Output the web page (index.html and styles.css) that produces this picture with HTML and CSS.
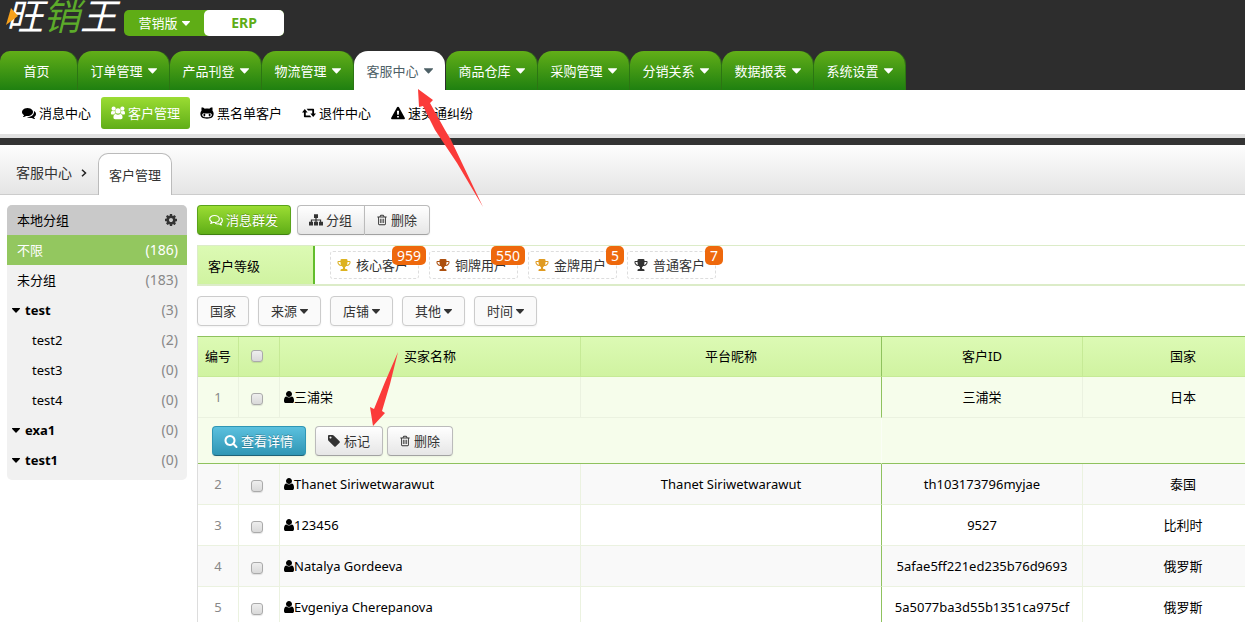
FILE: index.html
```html
<!DOCTYPE html>
<html lang="zh-CN">
<head>
<meta charset="utf-8">
<title>客户管理</title>
<link rel="stylesheet" href="styles.css">
</head>
<body>
<svg class="sprite" aria-hidden="true">
  <symbol id="comments" viewBox="0 0 1792 1792"><path d="M1408 768q0 139-94 257t-256.500 186.500-353.500 68.500q-86 0-176-16-124 88-278 128-36 9-86 16h-3q-11 0-20.500-8t-11.500-21q-1-3-1-6.500t.5-6.500 2-6l2.500-5 3.500-5.500 4-5 4.500-5 4-4.500q5-6 23-25t26-29.500 22.500-29 25-38.500 20.500-44q-124-72-195-177t-71-224q0-139 94-257t256.500-186.500 353.500-68.500 353.500 68.500 256.500 186.500 94 257zm384 256q0 120-71 224.500t-195 176.500q10 24 20.500 44t25 38.500 22.500 29 26 29.500 23 25q1 1 4 4.500t4.500 5 4 5 3.500 5.500l2.500 5 2 6 .5 6.500-1 6.500q-3 14-13 22t-22 7q-50-7-86-16-154-40-278-128-90 16-176 16-271 0-472-132 58 4 88 4 161 0 309-45t264-129q125-92 192-212t67-254q0-77-23-152 129 71 204 178t75 230z"/></symbol>
  <symbol id="comments-o" viewBox="0 0 16 16"><path fill="none" stroke="currentColor" stroke-width="1.300" stroke-linejoin="round" d="M6.300 2.800C3.300 2.800.8 4.500.8 6.800c0 1.400.9 2.500 2.300 3.200L2 12c1.300-.3 2-.8 2.700-1.300.5.100 1 .1 1.600.1 3 0 5.500-1.700 5.500-4s-2.500-4-5.500-4zM13.300 5.500c1.200.7 2 1.800 2 3 0 1.400-.9 2.500-2.200 3.200l1.100 2c-1.300-.3-2.100-.8-2.700-1.300-1.700.3-3.300 0-4.500-.6"/></symbol>
  <symbol id="group" viewBox="0 0 16 16"><circle cx="3" cy="3" r="2.400"/><circle cx="13" cy="3" r="2.400"/><circle cx="8" cy="5.700" r="3"/><path d="M0 8.500C0 6.500.6 5.500 1.600 5.500c1 .6 2 .6 2.900.2C4.400 7 5 8 5.600 8.600 4.300 8.500 3.600 9 3.100 9.700H1.300C.5 9.700 0 9.200 0 8.500zM16 8.500c0-2-.6-3-1.600-3-1 .6-2 .6-2.900.2.100 1.300-.5 2.300-1.100 2.900 1.300-.1 2 .4 2.500 1.100h1.800c.8 0 1.300-.5 1.300-1.200zM2.800 13.200c0-2.700.8-4.200 2.600-4.200 1.600 1.200 3.600 1.200 5.200 0 1.800 0 2.600 1.500 2.600 4.200 0 1.200-.8 1.900-1.900 1.900H4.700c-1.100 0-1.900-.7-1.900-1.900z"/></symbol>
  <symbol id="cat" viewBox="0 0 16 16"><path fill-rule="evenodd" d="M2 1.500c1.500.2 2.700.9 3.500 1.600 1.600-.4 3.400-.4 5 0 .8-.7 2-1.400 3.500-1.600.5 1.200.5 2.500.2 3.500.9 1 1.400 2.200 1.400 3.700 0 4.200-2.500 5.800-7.600 5.800S.4 12.900.4 8.700C.4 7.200.9 6 1.800 5c-.3-1-.3-2.300.2-3.500zM5 8.200c-1.700 0-2.500.6-2.500 2.100 0 1.900 1.800 2.600 5.500 2.600s5.500-.7 5.500-2.600c0-1.500-.8-2.100-2.500-2.100-1 0-1.900.3-3 .3s-2-.3-3-.3z"/><ellipse cx="5" cy="10.300" rx="1.100" ry="1.600"/><ellipse cx="11" cy="10.300" rx="1.100" ry="1.600"/></symbol>
  <symbol id="retweet" viewBox="0 0 16 16"><path d="M0 7.300 3.200 3.300 6.400 7.300H4.300v3.600h4.800l1.600 2H3.400c-.7 0-1.200-.4-1.200-1.200V7.300zM16 8.700l-3.200 4-3.200-4h2.100V5.100H6.900l-1.600-2h7.300c.7 0 1.200.4 1.200 1.200v4.400z"/></symbol>
  <symbol id="warning" viewBox="0 0 16 16"><path fill-rule="evenodd" d="M8 .8c.5 0 .9.200 1.100.7l6.600 11.800c.5.900-.1 1.900-1.100 1.900H1.400c-1 0-1.600-1-1.100-1.900L6.900 1.500C7.100 1 7.500.8 8 .8zM6.800 5.500l.3 4.600h1.800l.3-4.600zM7 11.300v1.900h2v-1.900z"/></symbol>
  <symbol id="sitemap" viewBox="0 0 16 16"><path d="M5.700 1.500h4.600v4.200H8.700v1.600h5.200V10H16v4.300h-4.600V10h1.200V8.600H8.700V10h1.600v4.300H5.700V10h1.600V8.600H3.400V10h1.200v4.300H0V10h2.100V7.300h5.200V5.700H5.700z"/></symbol>
  <symbol id="trash" viewBox="0 0 1792 1792"><path d="M704 736v576q0 14-9 23t-23 9h-64q-14 0-23-9t-9-23v-576q0-14 9-23t23-9h64q14 0 23 9t9 23zm256 0v576q0 14-9 23t-23 9h-64q-14 0-23-9t-9-23v-576q0-14 9-23t23-9h64q14 0 23 9t9 23zm256 0v576q0 14-9 23t-23 9h-64q-14 0-23-9t-9-23v-576q0-14 9-23t23-9h64q14 0 23 9t9 23zm128 724v-948h-896v948q0 22 7 40.500t14.500 27 10.500 8.500h832q3 0 10.500-8.500t14.500-27 7-40.500zm-672-1076h448l-48-117q-7-9-17-11h-317q-10 2-17 11zm928 32v64q0 14-9 23t-23 9h-96v948q0 83-47 143.500t-113 60.500h-832q-66 0-113-58.500t-47-141.500v-952h-96q-14 0-23-9t-9-23v-64q0-14 9-23t23-9h309l70-167q15-37 54-63t79-26h320q40 0 79 26t54 63l70 167h309q14 0 23 9t9 23z"/></symbol>
  <symbol id="cog" viewBox="0 0 1792 1792"><path d="M1152 896q0-106-75-181t-181-75-181 75-75 181 75 181 181 75 181-75 75-181zm512-109v222q0 12-8 23t-20 13l-185 28q-19 54-39 91 35 50 107 138 10 12 10 25t-9 23q-27 37-99 108t-94 71q-12 0-26-9l-138-108q-44 23-91 38-16 136-29 186-7 28-36 28h-222q-14 0-24.500-8.500t-11.500-21.500l-28-184q-49-16-90-37l-141 107q-10 9-25 9-14 0-25-11-126-114-165-168-7-10-7-23 0-12 8-23 15-21 51-66.500t54-70.500q-27-50-41-99l-183-27q-13-2-21-12.500t-8-23.500v-222q0-12 8-23t19-13l186-28q14-46 39-92-40-57-107-138-10-12-10-24 0-10 9-23 26-36 98.500-107.500t94.500-71.500q13 0 26 10l138 107q44-23 91-38 16-136 29-186 7-28 36-28h222q14 0 24.500 8.500t11.500 21.500l28 184q49 16 90 37l142-107q9-9 24-9 13 0 25 10 129 119 165 170 7 8 7 22 0 12-8 23-15 21-51 66.500t-54 70.500q26 50 41 98l183 28q13 2 21 12.500t8 23.500z"/></symbol>
  <symbol id="trophy" viewBox="0 0 1792 1792"><path d="M522 883q-74-162-74-371h-256v96q0 78 94.500 162t235.500 113zm1078-275v-96h-256q0 209-74 371 141-29 235.500-113t94.500-162zm128-128v128q0 71-41.500 143t-112 130-173 97.500-215.500 44.500q-42 54-95 95-38 34-52.500 72.500t-14.500 89.500q0 54 30.500 91t97.500 37q75 0 133.500 45.500t58.500 114.500v64q0 14-9 23t-23 9h-832q-14 0-23-9t-9-23v-64q0-69 58.500-114.500t133.500-45.500q67 0 97.500-37t30.500-91q0-51-14.500-89.500t-52.500-72.500q-53-41-95-95-113-5-215.500-44.500t-173-97.500-112-130-41.500-143v-128q0-40 28-68t68-28h288v-96q0-66 47-113t113-47h576q66 0 113 47t47 113v96h288q40 0 68 28t28 68z"/></symbol>
  <symbol id="user" viewBox="0 0 1792 1792"><path d="M1536 1399q0 109-62.500 187t-150.500 78h-854q-88 0-150.500-78t-62.500-187q0-85 8.500-160.500t31.500-152 58.500-131 94-89 134.500-34.500q131 128 313 128t313-128q76 0 134.500 34.500t94 89 58.500 131 31.500 152 8.500 160.500zm-256-887q0 159-112.500 271.500t-271.500 112.500-271.500-112.500-112.500-271.500 112.500-271.500 271.500-112.500 271.500 112.500 112.500 271.500z"/></symbol>
  <symbol id="search" viewBox="0 0 1792 1792"><path d="M1216 832q0-185-131.500-316.500t-316.500-131.500-316.500 131.500-131.500 316.500 131.500 316.500 316.500 131.500 316.500-131.500 131.500-316.500zm512 832q0 52-38 90t-90 38q-54 0-90-38l-343-342q-179 124-399 124-143 0-273.500-55.500t-225-150-150-225-55.500-273.500 55.500-273.500 150-225 225-150 273.500-55.500 273.500 55.500 225 150 150 225 55.500 273.500q0 220-124 399l343 343q37 37 37 90z"/></symbol>
  <symbol id="tag" viewBox="0 0 1792 1792"><path d="M576 448q0-53-37.500-90.500t-90.500-37.500-90.500 37.500-37.500 90.500 37.500 90.500 90.500 37.500 90.500-37.500 37.500-90.500zm1067 576q0 53-37 90l-491 492q-39 37-91 37-53 0-90-37l-715-716q-38-37-64.500-101t-26.500-117v-416q0-52 38-90t90-38h416q53 0 117 26.500t102 64.500l715 714q37 39 37 91z"/></symbol>
  <symbol id="caret" viewBox="0 0 8 5"><path d="M.6 0h6.800c.6 0 .8.500.4.900L4.500 4.600c-.3.300-.7.300-1 0L.2.900C-.2.500 0 0 .6 0z"/></symbol>
</svg>

<header class="header">
  <div class="brand-row">
    <a class="logo" href="#" aria-label="旺销王"><svg class="logo-beak" viewBox="0 0 12 17"><path fill="#f7a11b" d="M5 0 12 8 0 17z"/></svg><span>旺</span><span class="logo-mid">销</span><span>王</span></a>
    <div class="edition"><button class="edition-on">营销版<svg class="caret"><use href="#caret"/></svg></button><button class="edition-off">ERP</button></div>
  </div>
  <nav class="tabs">
    <a class="tab tab-home" href="#">首页</a>
    <a class="tab" href="#">订单管理<svg class="caret"><use href="#caret"/></svg></a>
    <a class="tab" href="#">产品刊登<svg class="caret"><use href="#caret"/></svg></a>
    <a class="tab" href="#">物流管理<svg class="caret"><use href="#caret"/></svg></a>
    <a class="tab tab-active" href="#">客服中心<svg class="caret"><use href="#caret"/></svg></a>
    <a class="tab" href="#">商品仓库<svg class="caret"><use href="#caret"/></svg></a>
    <a class="tab" href="#">采购管理<svg class="caret"><use href="#caret"/></svg></a>
    <a class="tab" href="#">分销关系<svg class="caret"><use href="#caret"/></svg></a>
    <a class="tab" href="#">数据报表<svg class="caret"><use href="#caret"/></svg></a>
    <a class="tab" href="#">系统设置<svg class="caret"><use href="#caret"/></svg></a>
  </nav>
</header>

<nav class="subnav">
  <a class="subnav-item" href="#"><svg class="icon"><use href="#comments"/></svg>消息中心</a>
  <a class="subnav-item subnav-active" href="#"><svg class="icon"><use href="#group"/></svg>客户管理</a>
  <a class="subnav-item" href="#"><svg class="icon"><use href="#cat"/></svg>黑名单客户</a>
  <a class="subnav-item" href="#"><svg class="icon"><use href="#retweet"/></svg>退件中心</a>
  <a class="subnav-item" href="#"><svg class="icon"><use href="#warning"/></svg>速卖通纠纷</a>
</nav>

<div class="crumbs">
  <a class="crumb" href="#">客服中心</a>
  <svg class="chevron" viewBox="0 0 6 8"><path fill="none" stroke="#222" stroke-width="1.500" d="M1 .7 4.500 4 1 7.300"/></svg>
  <a class="crumb-tab" href="#">客户管理</a>
</div>

<div class="page">
  <aside class="sidebar">
    <div class="side-head"><span>本地分组</span><button class="gear" aria-label="设置"><svg class="icon"><use href="#cog"/></svg></button></div>
    <a class="side-row side-on" href="#"><span>不限</span><span class="count">(186)</span></a>
    <a class="side-row" href="#"><span>未分组</span><span class="count">(183)</span></a>
    <a class="side-row side-parent" href="#"><svg class="caret"><use href="#caret"/></svg><b>test</b><span class="count">(3)</span></a>
    <a class="side-row side-child" href="#"><span>test2</span><span class="count">(2)</span></a>
    <a class="side-row side-child" href="#"><span>test3</span><span class="count">(0)</span></a>
    <a class="side-row side-child" href="#"><span>test4</span><span class="count">(0)</span></a>
    <a class="side-row side-parent" href="#"><svg class="caret"><use href="#caret"/></svg><b>exa1</b><span class="count">(0)</span></a>
    <a class="side-row side-parent" href="#"><svg class="caret"><use href="#caret"/></svg><b>test1</b><span class="count">(0)</span></a>
  </aside>

  <main class="main">
    <div class="toolbar">
      <button class="btn btn-green"><svg class="icon"><use href="#comments-o"/></svg>消息群发</button>
      <div class="btn-group"><button class="btn"><svg class="icon"><use href="#sitemap"/></svg>分组</button><button class="btn btn-trash"><svg class="icon"><use href="#trash"/></svg>删除</button></div>
    </div>

    <div class="levels">
      <div class="levels-label">客户等级</div>
      <div class="levels-list">
        <a class="level" href="#"><svg class="icon gold"><use href="#trophy"/></svg>核心客户<span class="badge">959</span></a>
        <a class="level" href="#"><svg class="icon bronze"><use href="#trophy"/></svg>铜牌用户<span class="badge">550</span></a>
        <a class="level" href="#"><svg class="icon amber"><use href="#trophy"/></svg>金牌用户<span class="badge">5</span></a>
        <a class="level" href="#"><svg class="icon"><use href="#trophy"/></svg>普通客户<span class="badge">7</span></a>
      </div>
    </div>

    <div class="filters">
      <button class="filter">国家</button>
      <button class="filter">来源<svg class="caret"><use href="#caret"/></svg></button>
      <button class="filter">店铺<svg class="caret"><use href="#caret"/></svg></button>
      <button class="filter">其他<svg class="caret"><use href="#caret"/></svg></button>
      <button class="filter">时间<svg class="caret"><use href="#caret"/></svg></button>
    </div>

    <div class="table-wrap">
      <table class="grid">
        <colgroup><col class="c-num"><col class="c-check"><col class="c-wide"><col class="c-wide"><col class="c-mid"><col class="c-mid"></colgroup>
        <thead>
          <tr><th>编号</th><th><input type="checkbox" aria-label="全选"></th><th>买家名称</th><th class="edge">平台昵称</th><th>客户ID</th><th>国家</th></tr>
        </thead>
        <tbody>
          <tr class="picked"><td class="num">1</td><td><input type="checkbox" aria-label="选择 1"></td><td class="name"><svg class="icon"><use href="#user"/></svg>三浦栄</td><td class="edge"></td><td>三浦栄</td><td>日本</td></tr>
          <tr class="actions"><td colspan="4"><div class="row-actions"><button class="btn btn-blue"><svg class="icon"><use href="#search"/></svg>查看详情</button><button class="btn"><svg class="icon"><use href="#tag"/></svg>标记</button><button class="btn btn-trash"><svg class="icon"><use href="#trash"/></svg>删除</button></div></td><td colspan="2"></td></tr>
          <tr class="odd"><td class="num">2</td><td><input type="checkbox" aria-label="选择 2"></td><td class="name"><svg class="icon"><use href="#user"/></svg>Thanet Siriwetwarawut</td><td class="edge">Thanet Siriwetwarawut</td><td>th103173796myjae</td><td>泰国</td></tr>
          <tr><td class="num">3</td><td><input type="checkbox" aria-label="选择 3"></td><td class="name"><svg class="icon"><use href="#user"/></svg>123456</td><td class="edge"></td><td>9527</td><td>比利时</td></tr>
          <tr class="odd"><td class="num">4</td><td><input type="checkbox" aria-label="选择 4"></td><td class="name"><svg class="icon"><use href="#user"/></svg>Natalya Gordeeva</td><td class="edge"></td><td>5afae5ff221ed235b76d9693</td><td>俄罗斯</td></tr>
          <tr><td class="num">5</td><td><input type="checkbox" aria-label="选择 5"></td><td class="name"><svg class="icon"><use href="#user"/></svg>Evgeniya Cherepanova</td><td class="edge"></td><td>5a5077ba3d55b1351ca975cf</td><td>俄罗斯</td></tr>
        </tbody>
      </table>
    </div>
  </main>
</div>

<svg class="pointer pointer-up" viewBox="0 0 66 119" aria-hidden="true"><path fill="#fb3b39" d="M0 0 15 11 12 14 27 41 33 51 44 74 65 118 39 74 25 53 17 41 5 17 1 18z"/></svg>
<svg class="pointer pointer-down" viewBox="0 0 30 76" aria-hidden="true"><path fill="#fb3b39" d="M28 0 20 32 12 59 15 61 3 74 0 55 4 57 15 30z"/></svg>
</body>
</html>
```
FILE: styles.css
```css
* { box-sizing: border-box; }
html { overflow: hidden; height: 100%; }
body {
  margin: 0;
  height: 100%;
  overflow: hidden;
  background: #fff;
  color: #000;
  font: 13px/20px "Noto Sans", "Noto Sans CJK SC", sans-serif;
}
a { color: inherit; text-decoration: none; }
button { font: inherit; color: inherit; border: 0; background: none; padding: 0; margin: 0; }
svg { fill: currentColor; flex: none; }
.sprite { position: absolute; width: 0; height: 0; }
.icon { width: 14px; height: 14px; }
.caret { width: 8px; height: 5px; }

/* header */
.header { background: #2d2d2d; }
.brand-row { display: flex; height: 51px; padding-left: 6px; }
.logo {
  position: relative;
  display: flex;
  width: 118px;
  height: 36px;
  align-items: flex-end;
  color: #fff;
  font-size: 37px;
  line-height: 40px;
  font-style: italic;
}
.logo-mid { color: #5cab2a; }
.logo-beak { position: absolute; left: 0; top: 8px; width: 12px; height: 17px; z-index: 1; }
.edition {
  display: flex;
  align-self: flex-start;
  height: 26px;
  margin-top: 10px;
  border-radius: 5px;
  background: #5fad16;
  color: #fff;
}
.edition button { width: 80px; display: flex; align-items: center; justify-content: center; gap: 4px; }
.edition .edition-off { background: #fff; color: #5fad16; font-size: 14px; font-weight: bold; border-radius: 5px; }
.tabs { display: flex; gap: 1px; }
.tab {
  display: flex;
  align-items: center;
  justify-content: center;
  gap: 5px;
  width: 91px;
  height: 39px;
  border-radius: 14px 14px 0 0;
  background: linear-gradient(#62ae18, #1f8010);
  box-shadow: 1px 0 0 #2c7513;
  color: #fff;
}
.tab .caret { width: 9px; height: 6px; }
.tab-home { width: 77px; padding-right: 4px; border-top-left-radius: 10px; }
.tab-active { background: #fff; color: #4d6066; box-shadow: none; }

/* second level */
.subnav {
  display: flex;
  padding: 7px 12px 5px;
  border-bottom: 4px solid #e1e1e1;
}
.subnav-item { display: flex; align-items: center; gap: 3px; height: 32px; padding: 0 10px; border-radius: 3px; }
.subnav-active { background: linear-gradient(#9bdc33, #60ae18); color: #fff; }

/* breadcrumb */
.crumbs {
  display: flex;
  align-items: flex-end;
  height: 57px;
  padding-left: 16px;
  border-top: 7px solid #333;
  background: linear-gradient(#fdfdfd, #e4e4e4);
  box-shadow: inset 0 -1px 0 #ccc;
  color: #333;
}
.crumb { font-size: 14px; line-height: 20px; margin-bottom: 12px; }
.chevron { width: 6px; height: 8px; margin: 0 11px 18px 9px; }
.crumb-tab {
  padding: 11px 10px 10px;
  border: 1px solid #bbb;
  border-bottom: 0;
  border-radius: 10px 10px 0 0;
  background: #fff;
}

/* page */
.page { display: flex; align-items: flex-start; gap: 10px; padding: 10px 0 0 7px; }
.sidebar { flex: none; width: 180px; padding-bottom: 5px; border-radius: 5px; background: #f1f1f1; overflow: hidden; }
.side-head, .side-row { display: flex; align-items: center; height: 30px; padding: 0 9px 0 10px; }
.side-head { justify-content: space-between; background: #c9c9c9; }
.gear { display: flex; color: #333; }
.side-row .count { margin-left: auto; color: #888; font-size: 14px; }
.side-on { background: #93c75f; color: #fff; }
.side-row.side-on .count { color: #fff; }
.side-parent { padding-left: 5px; gap: 5px; }
.side-child { padding-left: 25px; }

.main { flex: 1; min-width: 0; }
.toolbar { display: flex; gap: 6px; }
.btn {
  display: flex;
  align-items: center;
  gap: 3px;
  height: 30px;
  padding: 0 12px 0 11px;
  border: 1px solid #bbb;
  border-bottom-color: #a2a2a2;
  border-radius: 4px;
  background: linear-gradient(#fff, #e6e6e6);
  box-shadow: 0 1px 2px rgba(0, 0, 0, .05);
  color: #333;
}
.btn-trash .icon { width: 12px; }
.btn-green, .btn-blue { color: #fff; text-shadow: 0 -1px 0 rgba(0, 0, 0, .25); }
.btn-green { border-color: #5aa31a #5aa31a #408010; background: linear-gradient(#9bdc33, #5fae17); }
.btn-blue { border-color: #2f96b4 #2f96b4 #1f6377; background: linear-gradient(#5bc0de, #2f96b4); }
.btn-group { display: flex; }
.btn-group .btn:first-child { border-radius: 4px 0 0 4px; border-right: 0; }
.btn-group .btn:last-child { border-radius: 0 4px 4px 0; }

.levels { display: flex; margin-top: 10px; border: solid #dcecc8; border-width: 1px 0 2px 1px; }
.levels-label {
  width: 117px;
  padding: 10px 10px 8px;
  border-right: 2px solid #62bd2c;
  background: linear-gradient(#dcfab4, #d0f3a1);
}
.levels-list { display: flex; gap: 10px; padding: 5px 15px; }
.level {
  position: relative;
  display: flex;
  align-items: center;
  gap: 5px;
  width: 89px;
  height: 28px;
  padding-left: 6px;
  border: 1px dashed #ddd;
  border-radius: 3px;
  color: #333;
}
.gold { color: #ddb321; }
.bronze { color: #ad500f; }
.amber { color: #e09b22; }
.badge {
  position: absolute;
  top: -6px;
  right: -8px;
  padding: 0 5px;
  border-radius: 5px;
  background: #ee680c;
  color: #fff;
  font-size: 14px;
  line-height: 19px;
}

.filters { display: flex; gap: 9px; margin-top: 10px; }
.filter {
  display: flex;
  align-items: center;
  gap: 3px;
  height: 30px;
  padding: 0 12px;
  border: 1px solid #ccc;
  border-radius: 4px;
  background: #fafafa;
  box-shadow: 0 1px 2px rgba(0, 0, 0, .05);
  color: #333;
}

/* customers */
.table-wrap { margin-top: 10px; overflow: hidden; }
.grid {
  width: 1087px;
  table-layout: fixed;
  border-collapse: separate;
  border-spacing: 0;
  border-left: 1px solid #ddd;
  border-top: 1px solid #8fc25e;
}
.c-num, .c-check { width: 41px; }
.c-wide { width: 301px; }
.c-mid { width: 201px; }
.grid th, .grid td {
  height: 41px;
  padding: 0 4px;
  border: solid #ebf2e0;
  border-width: 0 1px 1px 0;
  font-weight: normal;
  text-align: center;
  vertical-align: middle;
}
.grid th { height: 40px; padding-bottom: 2px; border-color: #c6ea96; background: linear-gradient(#dcfab4, #d0f3a1); }
.grid .edge { border-right-color: #8fc25e; }
.grid .num { color: #888; }
.grid .name { padding-left: 2px; text-align: left; }
.grid .name .icon { margin-right: -2px; vertical-align: -2px; }
.picked td, .actions td { background: #f6fdeb; }
.odd td { background: #f9f9f9; }
.grid .actions td { height: 46px; padding: 0 14px; border-bottom-color: #8fc25e; border-right-color: #fafef5; }
.row-actions { display: flex; gap: 4px; }
.row-actions .btn-blue { margin-right: 5px; }
.grid input {
  appearance: none;
  display: block;
  width: 12px;
  height: 12px;
  margin: 0 0 0 8px;
  border: 1px solid #aaa;
  border-radius: 3px;
  background: linear-gradient(#eee, #d9d9d9);
  box-shadow: 0 1px 1px rgba(0, 0, 0, .1);
}
.grid td input { margin-top: 4px; }

/* callout arrows over the page */
.pointer { position: absolute; z-index: 2; pointer-events: none; }
.pointer-up { left: 418px; top: 89px; width: 66px; height: 119px; }
.pointer-down { left: 370px; top: 352px; width: 30px; height: 76px; }
```
